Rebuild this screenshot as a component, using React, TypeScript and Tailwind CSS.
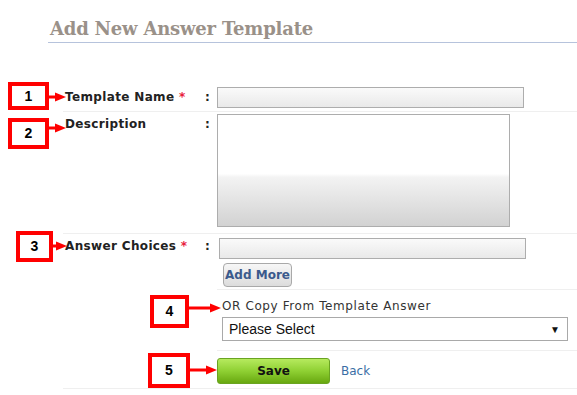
import React from 'react';

const label = "font-['DejaVu_Sans',Verdana,sans-serif] text-[12px] font-bold text-[#222] tracking-[0.35px]";

const Arrow = ({ className, len }: { className: string; len: number }) => (
  <svg className={`absolute ${className}`} width={len} height={10} viewBox={`0 0 ${len} 10`}>
    <rect x={0} y={3.5} width={len - 8} height={3} fill="#f00" />
    <polygon points={`${len - 11},0.5 ${len},5 ${len - 11},9.5`} fill="#f00" />
  </svg>
);

const Marker = ({ n, className }: { n: number; className: string }) => (
  <div
    className={`absolute flex items-center justify-center border-4 border-[#f00] bg-white font-['Liberation_Sans',Arial,sans-serif] text-[14px] font-bold text-black ${className}`}
  >
    {n}
  </div>
);

export default function App() {
  return (
    <div className="relative w-[577px] h-[395px] overflow-hidden bg-white">
      {/* Heading */}
      <div className="pl-[48px]">
        <h1 className="pt-[18px] pb-[2px] pl-[2px] border-b border-[#b6c3dc] text-[18px] leading-[22px] font-bold font-['DejaVu_Serif',Georgia,serif] text-[#9a9189] tracking-[-0.2px]">
          Add New Answer Template
        </h1>
      </div>

      {/* Form */}
      <div className="ml-[63px] mt-[41px]">
        {/* Template Name */}
        <div className="flex h-[28px] border-b border-[#efefef]">
          <div className={`w-[142px] pl-[2px] mt-[3px] leading-[21px] ${label}`}>
            Template Name <span className="text-[#e8203c]">*</span>
          </div>
          <div className={`w-[12px] mt-[3px] leading-[21px] ${label}`}>:</div>
          <div className="mt-[3px] w-[307px] h-[21px] border border-[#adadad] bg-[linear-gradient(to_bottom,#fafafa,#e9e9e9)]" />
        </div>

        {/* Description */}
        <div className="flex h-[122px] border-b border-[#efefef]">
          <div className={`w-[142px] pl-[2px] mt-[2px] leading-[21px] ${label}`}>Description</div>
          <div className={`w-[12px] mt-[2px] leading-[21px] ${label}`}>:</div>
          <div className="mt-[2px] w-[293px] h-[113px] border border-[#adadad] bg-[linear-gradient(to_bottom,#ffffff_53%,#f3f3f3_56%,#d2d2d2)]" />
        </div>

        {/* Answer Choices */}
        <div className="flex">
          <div className={`w-[142px] pl-[2px] mt-[2px] leading-[21px] ${label}`}>
            Answer Choices <span className="text-[#e8203c]">*</span>
          </div>
          <div className={`w-[12px] mt-[2px] leading-[21px] ${label}`}>:</div>
          <div className="flex-1 flex flex-col items-start border-b border-[#efefef] pb-[2px]">
            <div className="mt-[4px] ml-[2px] w-[307px] h-[21px] border border-[#adadad] bg-[linear-gradient(to_bottom,#fafafa,#e9e9e9)]" />
            <button className="mt-[4px] ml-[6px] w-[69px] h-[24px] rounded-[4px] border border-[#a9a9a9] bg-[linear-gradient(to_bottom,#f7f7f7,#dcdcdc)] font-['DejaVu_Sans',Verdana,sans-serif] text-[12px] font-bold text-[#3b5a8c]">
              Add More
            </button>
          </div>
        </div>

        {/* Copy from template */}
        <div className="flex">
          <div className="w-[154px]" />
          <div className="flex-1 border-b border-[#efefef] pt-[8px] pb-[9px] pl-[5px]">
            <div className="font-['DejaVu_Sans',Verdana,sans-serif] text-[12px] leading-[16px] text-[#333] tracking-[0.6px]">
              OR Copy From Template Answer
            </div>
            <div className="mt-[3px] w-[346px] h-[24px] border border-[#a9a9a9] bg-white flex items-center justify-between pl-[6px] pr-[7px] font-['Liberation_Sans',Arial,sans-serif] text-[14px] text-[#111]">
              <span>Please Select</span>
              <span className="text-[10px]">▼</span>
            </div>
          </div>
        </div>

        {/* Actions */}
        <div className="flex border-b border-[#efefef]">
          <div className="w-[154px]" />
          <div className="flex items-center pt-[7px] pb-[4px]">
            <button className="w-[113px] h-[26px] rounded-[3px] border border-[#6aa421] bg-[linear-gradient(to_bottom,#b6ea5e,#8fd033_50%,#68a810)] font-['DejaVu_Sans',Verdana,sans-serif] text-[12px] font-bold text-[#111]">
              Save
            </button>
            <a className="ml-[11px] font-['DejaVu_Sans',Verdana,sans-serif] text-[12px] text-[#3a6ea5]">Back</a>
          </div>
        </div>
      </div>

      {/* Annotations */}
      <Marker n={1} className="left-[8px] top-[82px] w-[41px] h-[28px]" />
      <Arrow className="left-[48px] top-[92px]" len={18} />
      <Marker n={2} className="left-[8px] top-[118px] w-[41px] h-[31px]" />
      <Arrow className="left-[48px] top-[123px]" len={18} />
      <Marker n={3} className="left-[16px] top-[231px] w-[37px] h-[31px]" />
      <Arrow className="left-[52px] top-[241px]" len={15} />
      <Marker n={4} className="left-[150px] top-[295px] w-[39px] h-[33px]" />
      <Arrow className="left-[188px] top-[303px]" len={33} />
      <Marker n={5} className="left-[148px] top-[353px] w-[42px] h-[35px]" />
      <Arrow className="left-[189px] top-[365px]" len={28} />
    </div>
  );
}
